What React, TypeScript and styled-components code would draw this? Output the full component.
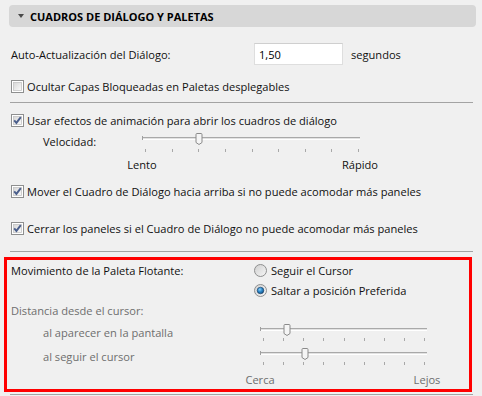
import React from "react";
import styled, { createGlobalStyle } from "styled-components";

const GlobalStyle = createGlobalStyle`
  body {
    margin: 0;
    background: #f0f0f0;
    font-family: "Segoe UI", "Open Sans", "Noto Sans", sans-serif;
    font-size: 11.1px;
    color: #111;
  }
`;

const Spage = styled.div`
  width: 482px;
  height: 396px;
  overflow: hidden;
  display: flex;
  flex-direction: column;
`;

const Sheader = styled.div`
  display: flex;
  align-items: center;
  gap: 6px;
  height: 22px;
  margin: 5px 6px 0 9px;
  padding-left: 9px;
  background: #d7d7d7;
  border-radius: 4px;
  font-weight: bold;
  font-size: 11px;
  color: #000;
`;

const Striangle = styled.span`
  width: 0;
  height: 0;
  border-left: 3.5px solid transparent;
  border-right: 3.5px solid transparent;
  border-top: 4px solid #4a4a4a;
`;

const Ssection = styled.div`
  display: flex;
  flex-direction: column;
  padding: 0 10px 0 11px;
`;

const Srow = styled.div<{ $top: number; $h: number }>`
  display: flex;
  align-items: center;
  margin-top: ${(p) => p.$top}px;
  height: ${(p) => p.$h}px;
  white-space: nowrap;
`;

const Slabel = styled.div<{ $w: number; $indent?: number; $muted?: boolean }>`
  width: ${(p) => p.$w}px;
  padding-left: ${(p) => p.$indent ?? 0}px;
  box-sizing: border-box;
  flex-shrink: 0;
  color: ${(p) => (p.$muted ? "#6e6e6e" : "#111")};
`;

const Sinput = styled.div`
  width: 89px;
  height: 22px;
  box-sizing: border-box;
  background: #fff;
  border: 1px solid #dedede;
  border-top-color: #cfcfcf;
  padding-left: 4px;
  display: flex;
  align-items: center;
  color: #000;
`;

const Sunit = styled.span`
  margin-left: 8px;
`;

const Scheck = styled.label`
  display: flex;
  align-items: center;
  gap: 3px;
  svg {
    flex-shrink: 0;
  }
`;

const Sdivider = styled.div<{ $top: number }>`
  height: 1px;
  background: #a3a3a3;
  margin: ${(p) => p.$top}px 9px 0 10px;
`;

const SsliderRow = styled.div<{ $top: number; $h: number }>`
  display: flex;
  align-items: flex-start;
  margin-top: ${(p) => p.$top}px;
  height: ${(p) => p.$h}px;
`;

const SsliderLabel = styled.div<{ $w: number; $indent: number; $muted?: boolean; $shift?: number }>`
  width: ${(p) => p.$w}px;
  padding-left: ${(p) => p.$indent}px;
  margin-top: ${(p) => p.$shift ?? 0}px;
  box-sizing: border-box;
  line-height: 18px;
  flex-shrink: 0;
  white-space: nowrap;
  color: ${(p) => (p.$muted ? "#6e6e6e" : "#111")};
`;

const SsliderTrack = styled.div<{ $shift?: number }>`
  margin-top: ${(p) => p.$shift ?? 0}px;
  display: flex;
`;

const SendLabels = styled.div<{ $left: number; $w: number; $muted?: boolean }>`
  display: flex;
  justify-content: space-between;
  margin-left: ${(p) => p.$left}px;
  width: ${(p) => p.$w}px;
  color: ${(p) => (p.$muted ? "#6e6e6e" : "#111")};
`;

const SendLabel = styled.span`
  width: 0;
  display: flex;
  justify-content: center;
  white-space: nowrap;
`;

const SredBox = styled.div`
  margin: 5px 0 0 4px;
  width: 468px;
  height: 135px;
  box-sizing: border-box;
  border: 3px solid #ff0000;
  display: flex;
  flex-direction: column;
  padding-left: 4px;
`;

const SradioCol = styled.div`
  display: flex;
  align-items: center;
  gap: 4px;
  white-space: nowrap;
`;

const CheckBox: React.FC<{ checked?: boolean }> = ({ checked }) => (
  <svg width="13" height="13" viewBox="0 0 13 13">
    <defs>
      <linearGradient id="cbg" x1="0" y1="0" x2="1" y2="1">
        <stop offset="0" stopColor="#d6d6d6" />
        <stop offset="1" stopColor="#fbfbfb" />
      </linearGradient>
    </defs>
    <rect x="0.5" y="0.5" width="12" height="12" fill="#fff" stroke="#8e8f8f" />
    <rect x="2.5" y="2.5" width="8" height="8" fill="url(#cbg)" stroke="#c4c4c4" strokeWidth="0.8" />
    {checked && (
      <path d="M3.2 6.4 L5.4 8.9 L9.8 3.1" fill="none" stroke="#4b5f8c" strokeWidth="1.9" />
    )}
  </svg>
);

const Radio: React.FC<{ checked?: boolean }> = ({ checked }) => (
  <svg width="13" height="13" viewBox="0 0 13 13">
    <defs>
      <linearGradient id="rbg" x1="0" y1="0" x2="1" y2="1">
        <stop offset="0" stopColor="#cfcfcf" />
        <stop offset="1" stopColor="#f7f7f7" />
      </linearGradient>
      <radialGradient id="rdot" cx="0.4" cy="0.35" r="0.7">
        <stop offset="0" stopColor="#8fd2fb" />
        <stop offset="0.5" stopColor="#2a86c8" />
        <stop offset="1" stopColor="#124a7c" />
      </radialGradient>
    </defs>
    <circle cx="6.5" cy="6.5" r="6" fill="url(#rbg)" stroke="#8e8f8f" />
    {checked && <circle cx="6.5" cy="6.5" r="3.3" fill="url(#rdot)" stroke="#1a3a60" strokeWidth="0.6" />}
  </svg>
);

const Slider: React.FC<{ width: number; thumb: number; tickStart: number; tickEnd: number; tickY: number }> = ({
  width,
  thumb,
  tickStart,
  tickEnd,
  tickY,
}) => {
  const ticks = Array.from({ length: 9 }, (_, i) => tickStart + ((tickEnd - tickStart) * i) / 8);
  return (
    <svg width={width} height="20" viewBox={`0 0 ${width} 20`}>
      <rect x="0" y="4" width={width} height="1" fill="#a9a9a9" />
      <rect x="0" y="5" width={width} height="1" fill="#e2e2e2" />
      <rect x="0" y="6" width={width} height="1" fill="#ffffff" />
      <rect x="0" y="3" width="1" height="4" fill="#a0a0a0" />
      {ticks.map((t) => (
        <rect key={t} x={Math.round(t)} y={tickY} width="1" height="3" fill="#a8a8a8" />
      ))}
      <path
        d={`M${thumb - 3} 1.5 Q${thumb - 3} 0.5 ${thumb - 2} 0.5 L${thumb + 2} 0.5 Q${thumb + 3} 0.5 ${thumb + 3} 1.5 L${thumb + 3} 9.5 L${thumb} 11.5 L${thumb - 3} 9.5 Z`}
        fill="#f5f5f5"
        stroke="#8a8a8a"
      />
    </svg>
  );
};

const App: React.FC = () => {
  return (
    <Spage>
      <GlobalStyle />
      <Sheader>
        <Striangle />
        CUADROS DE DIÁLOGO Y PALETAS
      </Sheader>
      <Ssection>
        <Srow $top={16} $h={22}>
          <Slabel $w={243}>Auto-Actualización del Diálogo:</Slabel>
          <Sinput>1,50</Sinput>
          <Sunit>segundos</Sunit>
        </Srow>
        <Srow $top={15} $h={13}>
          <Scheck>
            <CheckBox />
            Ocultar Capas Bloqueadas en Paletas desplegables
          </Scheck>
        </Srow>
      </Ssection>
      <Sdivider $top={9} />
      <Ssection>
        <Srow $top={11} $h={13}>
          <Scheck>
            <CheckBox checked />
            Usar efectos de animación para abrir los cuadros de diálogo
          </Scheck>
        </Srow>
        <SsliderRow $top={6} $h={20}>
          <SsliderLabel $w={131} $indent={32}>
            Velocidad:
          </SsliderLabel>
          <Slider width={218} thumb={57} tickStart={3} tickEnd={216} tickY={16} />
        </SsliderRow>
        <Srow $top={2} $h={18}>
          <SendLabels $left={131} $w={218}>
            <SendLabel>Lento</SendLabel>
            <SendLabel>Rápido</SendLabel>
          </SendLabels>
        </Srow>
        <Srow $top={12} $h={13}>
          <Scheck>
            <CheckBox checked />
            Mover el Cuadro de Diálogo hacia arriba si no puede acomodar más paneles
          </Scheck>
        </Srow>
        <Srow $top={24} $h={13}>
          <Scheck>
            <CheckBox checked />
            Cerrar los paneles si el Cuadro de Diálogo no puede acomodar más paneles
          </Scheck>
        </Srow>
      </Ssection>
      <Sdivider $top={16} />
      <SredBox>
        <Srow $top={0} $h={20}>
          <Slabel $w={243}>Movimiento de la Paleta Flotante:</Slabel>
          <SradioCol>
            <Radio />
            Seguir el Cursor
          </SradioCol>
        </Srow>
        <Srow $top={0} $h={20}>
          <Slabel $w={243} />
          <SradioCol>
            <Radio checked />
            Saltar a posición Preferida
          </SradioCol>
        </Srow>
        <Srow $top={0} $h={20}>
          <Slabel $w={243} $muted>
            Distancia desde el cursor:
          </Slabel>
        </Srow>
        <SsliderRow $top={0} $h={25}>
          <SsliderLabel $w={249} $indent={32} $muted $shift={4}>
            al aparecer en la pantalla
          </SsliderLabel>
          <SsliderTrack $shift={4}>
            <Slider width={167} thumb={27} tickStart={3} tickEnd={164} tickY={14} />
          </SsliderTrack>
        </SsliderRow>
        <SsliderRow $top={0} $h={24}>
          <SsliderLabel $w={249} $indent={32} $muted $shift={3}>
            al seguir el cursor
          </SsliderLabel>
          <SsliderTrack $shift={3}>
            <Slider width={167} thumb={45} tickStart={3} tickEnd={164} tickY={14} />
          </SsliderTrack>
        </SsliderRow>
        <Srow $top={0} $h={20}>
          <SendLabels $left={249} $w={167} $muted>
            <SendLabel>Cerca</SendLabel>
            <SendLabel>Lejos</SendLabel>
          </SendLabels>
        </Srow>
      </SredBox>
      <Sdivider $top={2} />
    </Spage>
  );
};

export default App;
